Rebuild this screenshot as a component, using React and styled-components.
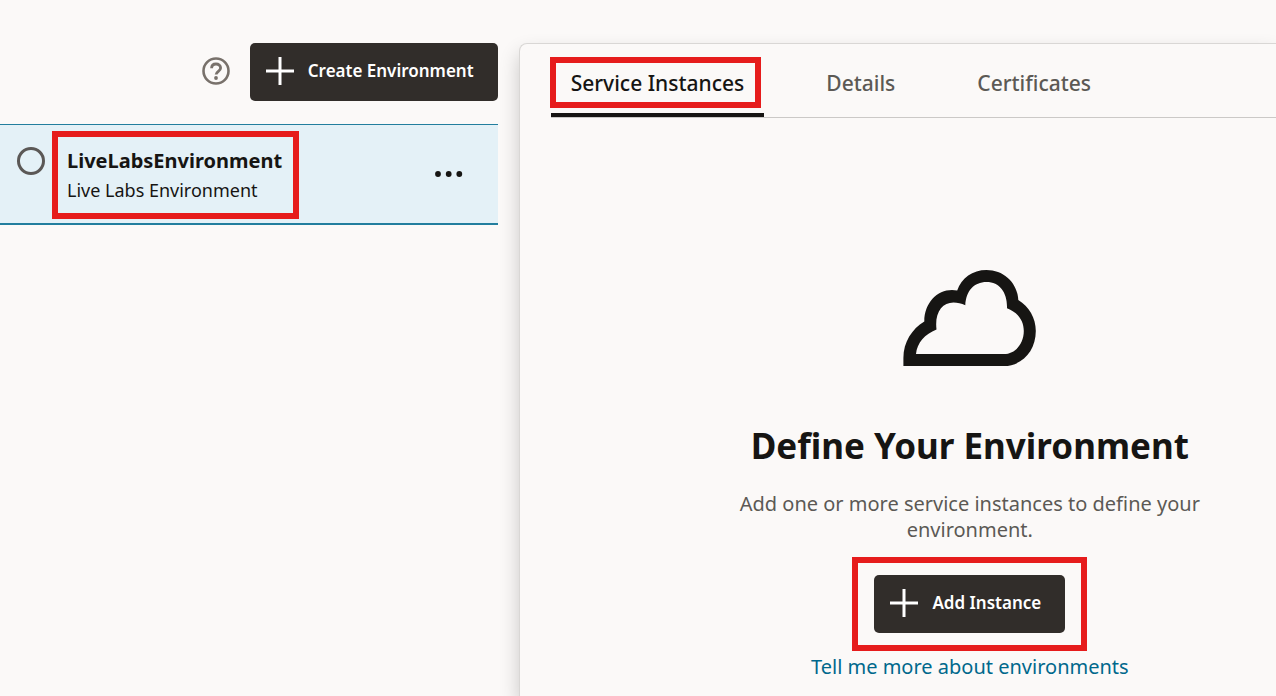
import React from "react";
import styled, { createGlobalStyle } from "styled-components";

const GlobalStyle = createGlobalStyle`
  * { box-sizing: border-box; }
  body {
    margin: 0;
    background: #fbf9f8;
    color: #161513;
    font-family: "Noto Sans", "Open Sans", sans-serif;
  }
`;

const Page = styled.div`
  display: grid;
  grid-template-columns: 39fr 61fr;
  min-height: 100vh;
`;

const Sidebar = styled.aside`
  padding-top: 43px;
`;

const Toolbar = styled.header`
  display: flex;
  align-items: center;
  justify-content: flex-end;
  gap: 20px;
  margin-bottom: 23px;
`;

const IconButton = styled.button`
  display: flex;
  padding: 0 0 2px;
  border: 0;
  background: none;
  color: ${(p) => p.$color};
  cursor: pointer;
`;

const PrimaryButton = styled.button`
  display: flex;
  align-items: center;
  gap: 14px;
  height: 58px;
  padding: 0 24px 2px 16px;
  border: 0;
  border-radius: 5px;
  background: #312d2a;
  color: #fff;
  font: 600 17px/24px "Noto Sans", "Open Sans", sans-serif;
  white-space: nowrap;
  cursor: pointer;
`;

const List = styled.ul`
  margin: 0;
  padding: 0;
  list-style: none;
`;

const ListItem = styled.li`
  display: flex;
  align-items: flex-start;
  height: 101px;
  padding: 22px 35px 0 17px;
  border-top: 1px solid #227e9e;
  border-bottom: 2px solid #227e9e;
  background: #e4f1f7;
`;

const Radio = styled.input`
  appearance: none;
  width: 28px;
  height: 28px;
  margin: 0;
  border: 3px solid #5b5856;
  border-radius: 50%;
`;

const ItemLabel = styled.label`
  position: relative;
  flex: 1;
  margin-left: 22px;
`;

const ItemName = styled.strong`
  display: block;
  font-size: 20px;
  font-weight: 700;
  line-height: 28px;
`;

const ItemNote = styled.span`
  display: block;
  font-size: 18px;
  line-height: 30px;
`;

const MenuSlot = styled.div`
  margin-top: 24px;
`;

const Highlight = styled.span`
  position: absolute;
  top: ${(p) => p.$top}px;
  left: ${(p) => p.$left}px;
  width: ${(p) => p.$width}px;
  height: ${(p) => p.$height}px;
  border: 6px solid #e61c1c;
  pointer-events: none;
`;

const Panel = styled.main`
  margin: 43px 0 0 21px;
  padding-left: 31px;
  border: 1px solid #d9d7d5;
  border-width: 1px 0 0 1px;
  border-radius: 8px 0 0 0;
  background: #fbf9f8;
  box-shadow: 0 10px 20px rgba(0, 0, 0, 0.2);
  clip-path: inset(-20px 0 0 -24px);
`;

const Tabs = styled.nav`
  display: flex;
  gap: 42px;
  height: 74px;
  border-bottom: 1px solid #cbc9c7;
`;

const Tab = styled.button`
  position: relative;
  padding: 8px 20px 0;
  border: 0;
  border-bottom: 4px solid ${(p) => (p.$active ? "#161513" : "transparent")};
  background: none;
  color: ${(p) => (p.$active ? "#161513" : "#5c5955")};
  font: 500 21px/28px "Noto Sans", "Open Sans", sans-serif;
  white-space: nowrap;
  cursor: pointer;
`;

const EmptyState = styled.section`
  display: flex;
  flex-direction: column;
  align-items: center;
  padding: 142px 0 0 113px;
  text-align: center;
`;

const Title = styled.h1`
  margin: 42px 0 0;
  font-size: 35px;
  font-weight: 700;
  line-height: 48px;
`;

const Description = styled.p`
  max-width: 490px;
  margin: 21px 0 0;
  color: #5c5955;
  font-size: 20px;
  line-height: 26px;
`;

const Action = styled.div`
  position: relative;
  margin: 32px 0 20px;
`;

const Link = styled.a`
  color: #00688c;
  font-size: 20px;
  line-height: 28px;
  text-decoration: none;
`;

const PlusIcon = () => (
  <svg width="28" height="28" viewBox="0 0 28 28" aria-hidden="true">
    <path d="M14 0v28M0 14h28" stroke="#fff" strokeWidth="3" />
  </svg>
);

const HelpIcon = () => (
  <svg width="28" height="28" viewBox="0 0 28 28" fill="none" stroke="currentColor" aria-hidden="true">
    <circle cx="14" cy="14" r="12.5" strokeWidth="2.6" />
    <path d="M9.6 11.2C9.6 8.6 11.4 7 14 7s4.6 1.6 4.6 4c0 3.2-4.5 3.4-4.500 6.600" strokeWidth="2.8" />
    <circle cx="14" cy="21" r="1.9" fill="currentColor" stroke="none" />
  </svg>
);

const MoreIcon = () => (
  <svg width="28" height="6" viewBox="0 0 28 6" fill="currentColor" aria-hidden="true">
    <circle cx="3" cy="3" r="2.9" />
    <circle cx="13.7" cy="3" r="2.9" />
    <circle cx="24.3" cy="3" r="2.9" />
  </svg>
);

const CloudIcon = () => (
  <svg width="134" height="120" viewBox="13 0 134 120" aria-hidden="true">
    <path
      fill="#161513"
      fillRule="evenodd"
      d="M13.4 106V98C13.4 82 22 69 34.3 61.5C34.3 43 47 30 62 30Q65 30 67.2 30.4C71.5 18 82.5 10 96.5 10C114 10 127.5 23 128.3 40C139 46.5 145.8 58 145.8 71C145.8 91 132 106 114 106ZM26 94C27 83 35 74 46.5 69.5C44.5 53 52 42.5 63.5 42.5C67.5 42.5 71.5 43.5 75.3 45.2C76 31 84 22 96.5 22C110 22 117.5 33 117 48.3C128 52.5 133.8 61 133.8 71C133.8 84 125 94 114 94Z"
    />
  </svg>
);

export default function App() {
  return (
    <>
      <GlobalStyle />
      <Page>
        <Sidebar>
          <Toolbar>
            <IconButton $color="#78716b" aria-label="Help">
              <HelpIcon />
            </IconButton>
            <PrimaryButton>
              <PlusIcon />
              Create Environment
            </PrimaryButton>
          </Toolbar>
          <List>
            <ListItem>
              <Radio type="radio" id="environment" name="environment" />
              <ItemLabel htmlFor="environment">
                <ItemName>LiveLabsEnvironment</ItemName>
                <ItemNote>Live Labs Environment</ItemNote>
                <Highlight $top={-16} $left={-15} $width={247} $height={88} />
              </ItemLabel>
              <MenuSlot>
                <IconButton $color="#161513" aria-label="Actions">
                  <MoreIcon />
                </IconButton>
              </MenuSlot>
            </ListItem>
          </List>
        </Sidebar>
        <Panel>
          <Tabs>
            <Tab $active>
              Service Instances
              <Highlight $top={13} $left={-1} $width={211} $height={51} />
            </Tab>
            <Tab>Details</Tab>
            <Tab>Certificates</Tab>
          </Tabs>
          <EmptyState>
            <CloudIcon />
            <Title>Define Your Environment</Title>
            <Description>
              Add one or more service instances to define your environment.
            </Description>
            <Action>
              <PrimaryButton>
                <PlusIcon />
                Add Instance
              </PrimaryButton>
              <Highlight $top={-18} $left={-22} $width={235} $height={94} />
            </Action>
            <Link href="#environments">Tell me more about environments</Link>
          </EmptyState>
        </Panel>
      </Page>
    </>
  );
}
